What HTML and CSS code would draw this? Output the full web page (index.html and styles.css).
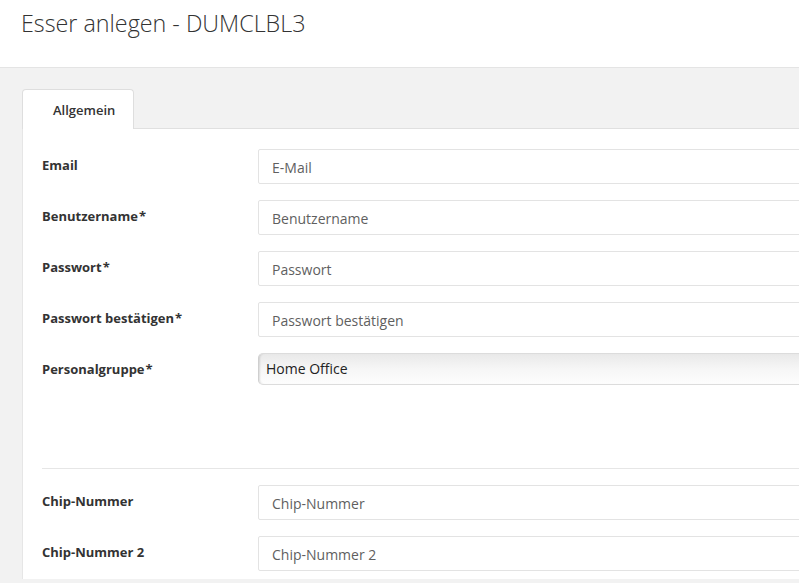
FILE: index.html
```html
<!DOCTYPE html>
<html lang="de">
<head>
<meta charset="utf-8">
<title>Esser anlegen - DUMCLBL3</title>
<link rel="stylesheet" href="styles.css">
</head>
<body>
<div class="page">
  <header class="page-header">
    <h1 class="title">Esser anlegen - DUMCLBL3</h1>
  </header>
  <section class="content">
    <nav class="tabs">
      <div class="tab active">Allgemein</div>
    </nav>
    <div class="panel">
      <div class="row">
        <label class="label">Email</label>
        <div class="field">E-Mail</div>
      </div>
      <div class="row">
        <label class="label">Benutzername<span class="req">*</span></label>
        <div class="field">Benutzername</div>
      </div>
      <div class="row">
        <label class="label">Passwort<span class="req">*</span></label>
        <div class="field">Passwort</div>
      </div>
      <div class="row">
        <label class="label">Passwort bestätigen<span class="req">*</span></label>
        <div class="field">Passwort bestätigen</div>
      </div>
      <div class="row row-select">
        <label class="label">Personalgruppe<span class="req">*</span></label>
        <div class="select">Home Office</div>
      </div>
      <hr class="divider">
      <div class="row">
        <label class="label">Chip-Nummer</label>
        <div class="field">Chip-Nummer</div>
      </div>
      <div class="row">
        <label class="label">Chip-Nummer 2</label>
        <div class="field">Chip-Nummer 2</div>
      </div>
    </div>
  </section>
</div>
</body>
</html>
```
FILE: styles.css
```css
html, body {
  margin: 0;
  padding: 0;
  background: #f2f2f2;
  overflow: hidden;
  height: 583px;
}
body {
  font-family: "Open Sans", "Noto Sans", sans-serif;
  color: #333;
}
.page {
  width: 1200px;
}
.page-header {
  background: #fff;
  height: 67px;
  box-sizing: border-box;
  padding: 7px 0 0 21px;
}
.title {
  margin: 0;
  font-size: 23.3px;
  font-weight: 300;
  line-height: 32px;
  color: #333;
}
.content {
  border-top: 1px solid #e4e4e4;
  background: #f2f2f2;
  padding: 21px 0 0 22px;
  height: 520px;
  box-sizing: border-box;
}
.tabs {
  display: flex;
  position: relative;
  z-index: 1;
  margin-bottom: -1px;
}
.tab {
  width: 112px;
  height: 40px;
  box-sizing: border-box;
  background: #fff;
  border: 1px solid #dedede;
  border-bottom: none;
  border-radius: 4px 4px 0 0;
  font-size: 13px;
  font-weight: 600;
  color: #333;
  display: flex;
  align-items: center;
  padding: 1px 0 0 30px;
}
.panel {
  background: #fff;
  border-top: 1px solid #e0e0e0;
  border-left: 1px solid #e6e6e6;
  padding: 20px 0 0 19px;
  height: 451px;
  box-sizing: border-box;
}
.row {
  display: grid;
  grid-template-columns: 216px 1fr;
  margin-bottom: 16px;
}
.row-select {
  margin-bottom: 0;
}
.label {
  font-size: 13px;
  font-weight: 700;
  line-height: 20px;
  padding-top: 6px;
  color: #333;
}
.req {
  margin-left: 1px;
}
.field {
  height: 35px;
  box-sizing: border-box;
  border: 1px solid #e3e3e3;
  border-radius: 2px;
  padding: 1px 0 0 13px;
  font-size: 14px;
  color: #5f5f5f;
  display: flex;
  align-items: center;
}
.select {
  height: 32px;
  box-sizing: border-box;
  border: 1px solid #dcdcdc;
  border-left-color: #cfcfcf;
  border-radius: 5px;
  background: linear-gradient(#e9e9e9, #f7f7f7 55%, #fdfdfd);
  box-shadow: inset 2px 0 2px -1px rgba(0,0,0,0.12);
  padding: 0 0 1px 7px;
  font-size: 14px;
  color: #222;
  display: flex;
  align-items: center;
}
.divider {
  border: none;
  border-top: 1px solid #e6e6e6;
  margin: 83px 0 16px 0;
  height: 0;
}
```
